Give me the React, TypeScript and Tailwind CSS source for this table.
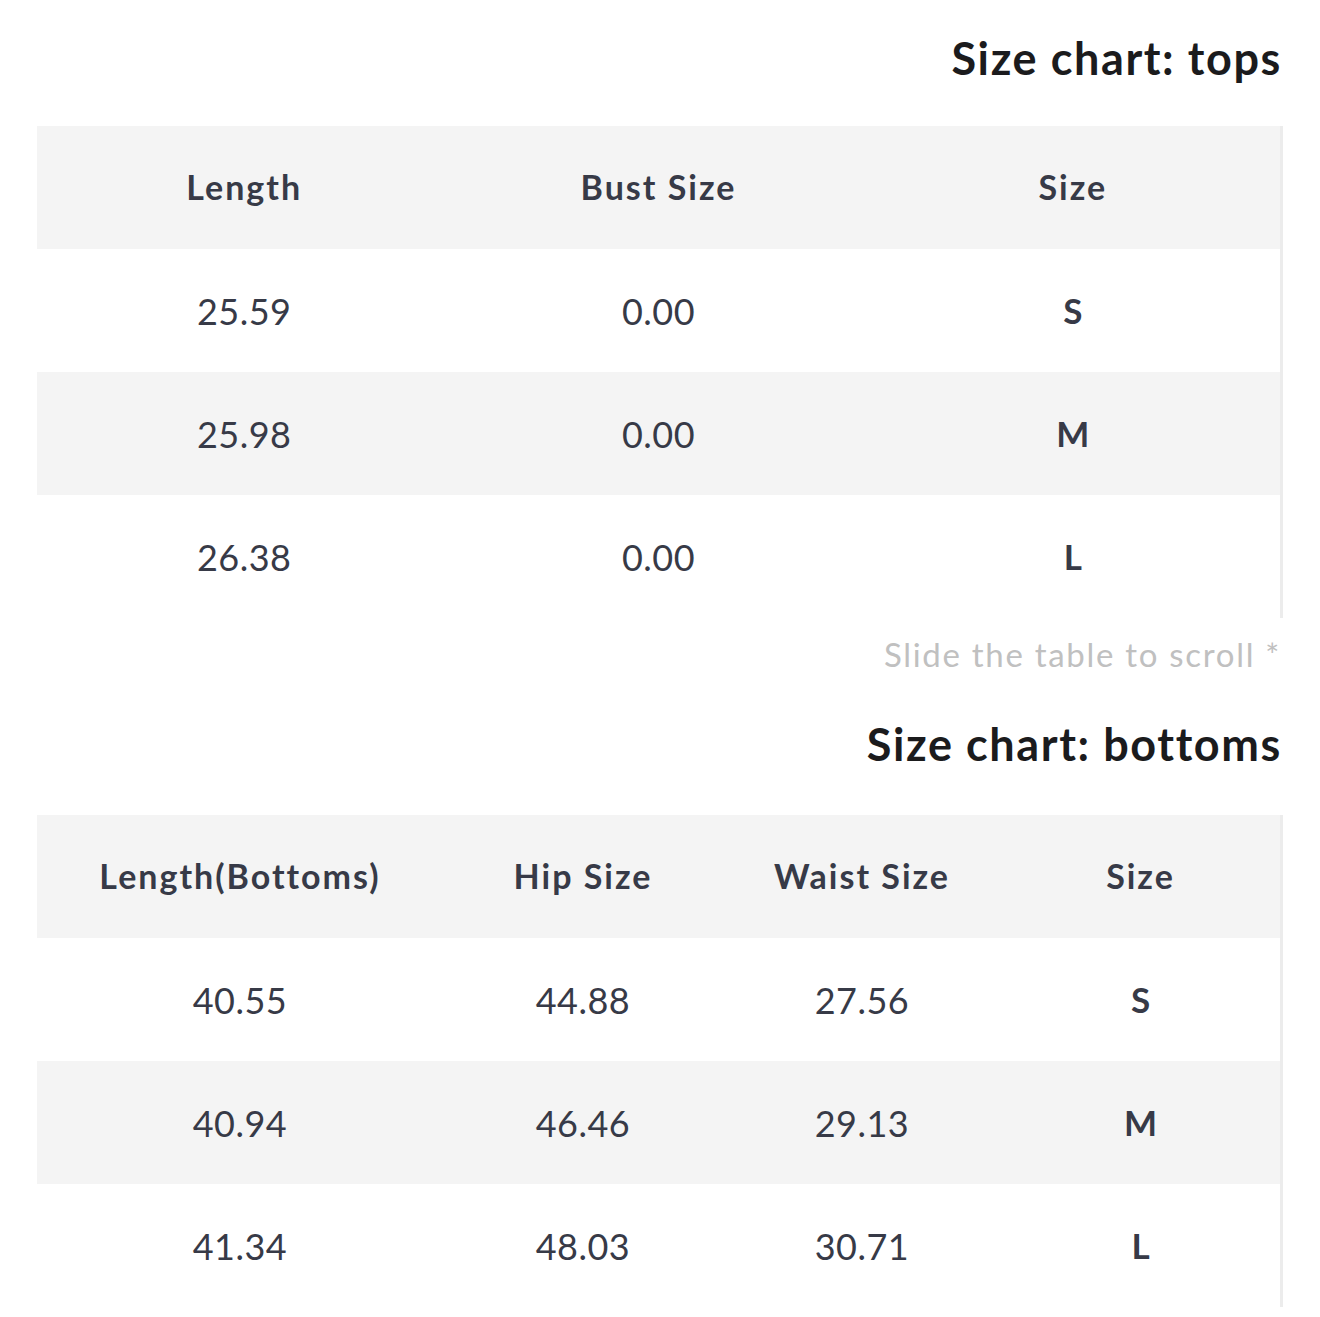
const tops = [
  ["25.59", "0.00", "S"],
  ["25.98", "0.00", "M"],
  ["26.38", "0.00", "L"],
]

const bottoms = [
  ["40.55", "44.88", "27.56", "S"],
  ["40.94", "46.46", "29.13", "M"],
  ["41.34", "48.03", "30.71", "L"],
]

function Title({ children }: { children: React.ReactNode }) {
  return (
    <h2 className="text-right pr-[1px] text-[45px] leading-[52px] font-bold tracking-[1.6px] text-[#1b1b1d]">
      {children}
    </h2>
  )
}

function SizeTable({ head, rows, widths }: { head: string[]; rows: string[][]; widths: string[] }) {
  return (
    <div className="border-r-[3px] border-[#ececec]">
      <table className="w-full table-fixed border-collapse text-center text-[#373a47]">
        <colgroup>
          {widths.map((w, i) => (
            <col key={i} className={w} />
          ))}
        </colgroup>
        <thead>
          <tr className="h-[123px] bg-[#f4f4f4]">
            {head.map(h => (
              <th key={h} className="pb-[3px] text-[34px] font-bold tracking-[2px]">{h}</th>
            ))}
          </tr>
        </thead>
        <tbody>
          {rows.map((r, i) => (
            <tr key={i} className={i === 1 ? "h-[123px] bg-[#f4f4f4]" : "h-[123px] bg-white"}>
              {r.map((c, j) => (
                <td
                  key={j}
                  className={j === r.length - 1 ? "text-[35px] font-bold" : "text-[36px] font-normal tracking-[0.5px]"}
                >
                  {c}
                </td>
              ))}
            </tr>
          ))}
        </tbody>
      </table>
    </div>
  )
}

export default function App() {
  return (
    <div className="min-h-[1317px] bg-white pl-[37px] pr-[37px] pt-[32px] font-['Lato',sans-serif]">
      <Title>Size chart: tops</Title>
      <div className="mt-[42px]">
        <SizeTable head={["Length", "Bust Size", "Size"]} rows={tops} widths={["w-1/3", "w-1/3", "w-1/3"]} />
      </div>
      <p className="mt-[16px] text-right pr-[2px] text-[33px] leading-[40px] font-normal text-[#c0c0c0] tracking-[1.7px]">
        Slide the table to scroll *
      </p>
      <div className="mt-[44px]">
        <Title>Size chart: bottoms</Title>
      </div>
      <div className="mt-[45px]">
        <SizeTable
          head={["Length(Bottoms)", "Hip Size", "Waist Size", "Size"]}
          rows={bottoms}
          widths={["w-[406px]", "w-[280px]", "w-[278px]", "w-[279px]"]}
        />
      </div>
    </div>
  )
}
